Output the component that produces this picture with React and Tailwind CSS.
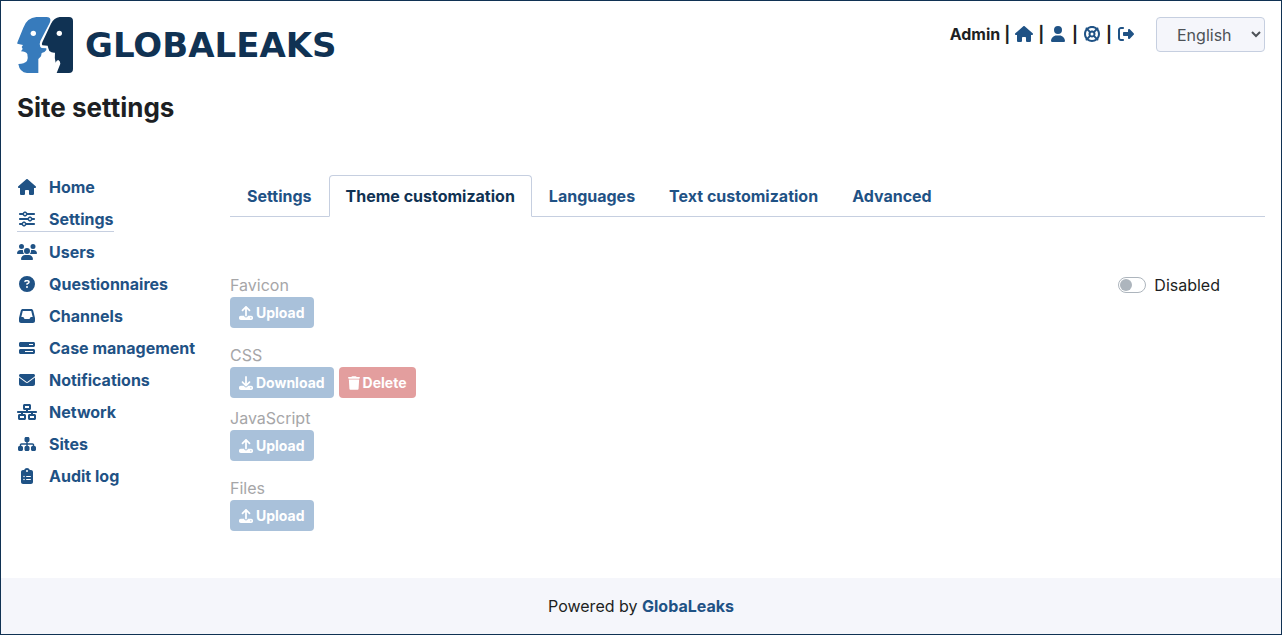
import {
  FaHouse,
  FaSliders,
  FaUsers,
  FaCircleQuestion,
  FaInbox,
  FaBarsProgress,
  FaEnvelope,
  FaNetworkWired,
  FaSitemap,
  FaClipboardList,
  FaUser,
  FaLifeRing,
  FaRightFromBracket,
  FaUpload,
  FaDownload,
  FaTrash,
} from "react-icons/fa6";

const menu = [
  { label: "Home", Icon: FaHouse },
  { label: "Settings", Icon: FaSliders, active: true },
  { label: "Users", Icon: FaUsers },
  { label: "Questionnaires", Icon: FaCircleQuestion },
  { label: "Channels", Icon: FaInbox },
  { label: "Case management", Icon: FaBarsProgress },
  { label: "Notifications", Icon: FaEnvelope },
  { label: "Network", Icon: FaNetworkWired },
  { label: "Sites", Icon: FaSitemap },
  { label: "Audit log", Icon: FaClipboardList },
];

const tabs = ["Settings", "Theme customization", "Languages", "Text customization", "Advanced"];

const shortcuts = [
  { label: "Home", Icon: FaHouse },
  { label: "Preferences", Icon: FaUser },
  { label: "Help", Icon: FaLifeRing },
  { label: "Logout", Icon: FaRightFromBracket },
];

function Logo() {
  return (
    <a href="#home" className="flex items-center gap-3 text-[#103253]">
      <svg viewBox="0 0 168 168" className="size-14" aria-hidden="true">
        <path
          fill="#377bbc"
          d="M58 0H88Q102 0 100 12L98 18L70 72Q66 82 70 90L74 93L88 94V99Q84 106 74 108L72 118L64 126V168H30Q8 166 4 141Q22 141 30 132Q34 124 31 111Q26 103 12 103L17 96L14 90L18 84L1 80Q0 78 2 74L19 32Q30 2 58 0Z"
        />
        <path
          fill="#103253"
          d="M128 0H156Q168 0 168 12V156Q168 168 156 168H119L130 140Q130 132 124 129Q118 130 116 137Q112 122 114 107Q104 108 97 102L94 94L92 86L76 85Q73 82 76 76L102 20Q111 2 128 0Z"
        />
        <circle cx="49" cy="49" r="8" fill="#fff" />
        <circle cx="127" cy="49" r="8" fill="#fff" />
      </svg>
      <span className="font-['DejaVu_Sans',sans-serif] text-[34px] leading-14 font-bold">GLOBALEAKS</span>
    </a>
  );
}

function ActionButton({ Icon, label, danger }) {
  return (
    <button
      type="button"
      disabled
      className={`flex h-[31px] items-center gap-[3px] rounded-[4px] px-[9px] text-sm font-bold text-white ${
        danger ? "bg-[#e39e9e]" : "bg-[#a9c1da]"
      }`}
    >
      <Icon className={danger ? "h-3.5 w-3" : "size-3.5"} />
      {label}
    </button>
  );
}

function Field({ label, children, className }) {
  return (
    <div role="group" aria-label={label} className={className}>
      <div className="text-[#a6a6a8]">{label}</div>
      <div className="flex gap-[5px]">{children}</div>
    </div>
  );
}

export default function App() {
  return (
    <div className="flex min-h-screen flex-col border border-[#103253] bg-white font-[Inter,sans-serif] text-base text-[#1d1f23]">
      <header className="flex items-start justify-between p-4 pb-0">
        <Logo />
        <div className="flex items-start gap-5">
          <div className="flex items-center gap-1 leading-[34px] font-bold">
            <span>Admin</span>
            {shortcuts.map(({ label, Icon }) => (
              <span key={label} className="flex items-center gap-1">
                <span>|</span>
                <a href={`#${label.toLowerCase()}`} aria-label={label} className="text-[#1f5285]">
                  <Icon className="h-4 w-5" />
                </a>
              </span>
            ))}
          </div>
          <select
            aria-label="Language"
            className="h-[35px] w-[109px] rounded-[4px] border border-[#c6cfe0] bg-[#f5f6fb] pl-4 text-[#4d5257]"
          >
            <option>English</option>
          </select>
        </div>
      </header>

      <h1 className="px-4 pt-4 text-[26px] leading-[38px] font-bold">Site settings</h1>

      <div className="flex grow gap-8 px-4 pt-12 pb-[46px]">
        <nav
          aria-label="Administration"
          className="flex w-[181px] shrink-0 flex-col items-start gap-2 font-bold text-[#1f5285]"
        >
          {menu.map(({ label, Icon, active }) => (
            <a
              key={label}
              href={`#${label}`}
              className={`flex items-center gap-3 whitespace-nowrap ${active ? "border-b border-[#c6cfe0]" : ""}`}
            >
              <Icon className="h-4 w-5" />
              {label}
            </a>
          ))}
        </nav>

        <main className="grow">
          <div role="tablist" className="flex border-b border-[#c6cfe0] font-bold">
            {tabs.map((label, i) => (
              <button
                key={label}
                type="button"
                role="tab"
                aria-selected={i === 1}
                className={`-mb-px rounded-t-[4px] border px-4 py-2 ${
                  i === 1
                    ? "border-[#c6cfe0] border-b-white bg-white text-[#103253]"
                    : "border-transparent text-[#1f5285]"
                }`}
              >
                {label}
              </button>
            ))}
          </div>

          <div className="flex items-start justify-between pt-14">
            <div>
              <Field label="Favicon" className="mb-[15px]">
                <ActionButton Icon={FaUpload} label="Upload" />
              </Field>
              <Field label="CSS" className="mb-2">
                <ActionButton Icon={FaDownload} label="Download" />
                <ActionButton Icon={FaTrash} label="Delete" danger />
              </Field>
              <Field label="JavaScript" className="mb-[15px]">
                <ActionButton Icon={FaUpload} label="Upload" />
              </Field>
              <Field label="Files">
                <ActionButton Icon={FaUpload} label="Upload" />
              </Field>
            </div>
            <label className="mr-[45px] flex items-center gap-2">
              <input
                type="checkbox"
                role="switch"
                className="flex h-4 w-7 appearance-none items-center rounded-full border border-[#adb5bd] bg-white px-px before:size-3 before:rounded-full before:bg-[#adb5bd] checked:justify-end"
              />
              Disabled
            </label>
          </div>
        </main>
      </div>

      <footer className="bg-[#f5f6fb] py-4 text-center">
        Powered by{" "}
        <a href="#globaleaks" className="font-bold text-[#1f5285]">
          GlobaLeaks
        </a>
      </footer>
    </div>
  );
}
